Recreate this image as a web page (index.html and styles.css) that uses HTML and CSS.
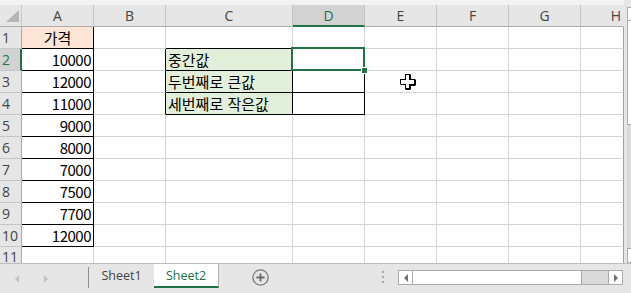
FILE: index.html
```html
<!DOCTYPE html>
<html lang="ko">
<head>
<meta charset="utf-8">
<title>Sheet2</title>
<link rel="stylesheet" href="styles.css">
</head>
<body>
<div class="app">
  <div class="main">
    <div class="sheet">
      <div class="topstrip"></div>

      <div class="hd corner"></div>
      <div class="hd col">A</div>
      <div class="hd col">B</div>
      <div class="hd col">C</div>
      <div class="hd col sel-col">D</div>
      <div class="hd col">E</div>
      <div class="hd col">F</div>
      <div class="hd col">G</div>
      <div class="hd col last">H</div>

      <div class="hd row">1</div>
      <div class="c a-box head-cell">가격</div>
      <div class="c"></div>
      <div class="c bb"></div>
      <div class="c bb"></div>
      <div class="c"></div><div class="c"></div><div class="c"></div><div class="c last"></div>

      <div class="hd row sel-row">2</div>
      <div class="c a-box num">10000</div>
      <div class="c br"></div>
      <div class="c t-box label">중간값</div>
      <div class="c t-box sel-cell"><span class="handle"></span></div>
      <div class="c"></div><div class="c"></div><div class="c"></div><div class="c last"></div>

      <div class="hd row">3</div>
      <div class="c a-box num">12000</div>
      <div class="c br"></div>
      <div class="c t-box label">두번째로 큰값</div>
      <div class="c t-box"></div>
      <div class="c"></div><div class="c"></div><div class="c"></div><div class="c last"></div>

      <div class="hd row">4</div>
      <div class="c a-box num">11000</div>
      <div class="c br"></div>
      <div class="c t-box label">세번째로 작은값</div>
      <div class="c t-box"></div>
      <div class="c"></div><div class="c"></div><div class="c"></div><div class="c last"></div>

      <div class="hd row">5</div>
      <div class="c a-box num">9000</div>
      <div class="c"></div><div class="c"></div><div class="c"></div><div class="c"></div><div class="c"></div><div class="c"></div><div class="c last"></div>

      <div class="hd row">6</div>
      <div class="c a-box num">8000</div>
      <div class="c"></div><div class="c"></div><div class="c"></div><div class="c"></div><div class="c"></div><div class="c"></div><div class="c last"></div>

      <div class="hd row">7</div>
      <div class="c a-box num">7000</div>
      <div class="c"></div><div class="c"></div><div class="c"></div><div class="c"></div><div class="c"></div><div class="c"></div><div class="c last"></div>

      <div class="hd row">8</div>
      <div class="c a-box num">7500</div>
      <div class="c"></div><div class="c"></div><div class="c"></div><div class="c"></div><div class="c"></div><div class="c"></div><div class="c last"></div>

      <div class="hd row">9</div>
      <div class="c a-box num">7700</div>
      <div class="c"></div><div class="c"></div><div class="c"></div><div class="c"></div><div class="c"></div><div class="c"></div><div class="c last"></div>

      <div class="hd row">10</div>
      <div class="c a-box num">12000</div>
      <div class="c"></div><div class="c"></div><div class="c"></div><div class="c"></div><div class="c"></div><div class="c"></div><div class="c last"></div>

      <div class="hd row cut">11</div>
      <div class="c cut"></div><div class="c cut"></div><div class="c cut"></div><div class="c cut"></div><div class="c cut"></div><div class="c cut"></div><div class="c cut"></div><div class="c cut last"></div>

      <svg class="cursor" width="16" height="16" viewBox="0 0 16 16">
        <path d="M5 0 H10 L11 1 V5 H15 L16 6 V11 L15 12 H11 V15 L10 16 H6 L5 15 V11 H1 L0 10 V5 H5 Z" fill="#000"/>
        <path d="M6 1 H9 V6 H14 V10 H9 V14 H6 V10 H1 V6 H6 Z" fill="#fff"/>
      </svg>
    </div>
    <div class="vscroll">
      <div class="vbtn top"></div>
      <div class="vthumb"></div>
      <div class="vtrack"></div>
      <div class="vbtn bottom"></div>
    </div>
  </div>

  <div class="tabbar">
    <div class="nav">
      <span class="tri left"></span>
      <span class="tri right"></span>
    </div>
    <div class="sep"></div>
    <div class="tab">Sheet1</div>
    <div class="tab current">Sheet2</div>
    <div class="add">
      <svg width="17" height="17" viewBox="0 0 17 17">
        <circle cx="8.5" cy="8.5" r="7.6" fill="none" stroke="#7a7a7a" stroke-width="1.3"/>
        <path d="M8.5 4.5 V12.5 M4.5 8.5 H12.5" stroke="#6a6a6a" stroke-width="1.8"/>
      </svg>
    </div>
    <div class="dots"><i></i><i></i><i></i></div>
    <div class="hscroll">
      <div class="hbtn"><span class="htri left"></span></div>
      <div class="hthumb"></div>
      <div class="htrack"></div>
      <div class="hbtn"><span class="htri right"></span></div>
    </div>
  </div>
</div>
</body>
</html>
```

FILE: styles.css
```css
* { box-sizing: border-box; }

html, body {
  margin: 0;
  padding: 0;
}

body {
  width: 631px;
  height: 293px;
  overflow: hidden;
  background: #e6e6e6;
  font-family: "Noto Sans CJK KR", "Noto Sans", sans-serif;
}

.app {
  display: flex;
  flex-direction: column;
  width: 631px;
  height: 293px;
}

.main {
  display: flex;
  height: 263px;
}

.sheet {
  position: relative;
  width: 624px;
  height: 263px;
  display: grid;
  grid-template-columns: 22px 72px 72px 127px 72px 72px 72px 72px 43px;
  grid-template-rows: 5px 22px repeat(10, 22px) 16px;
  background: #ffffff;
}

.topstrip {
  grid-column: 1 / -1;
  background: #f3f3f3;
}

/* headers */
.hd {
  background: #e6e6e6;
  color: #444444;
  font-family: "Open Sans", "Noto Sans", sans-serif;
  font-size: 14px;
  line-height: 21px;
  overflow: hidden;
}

.col {
  text-align: center;
  border-right: 1px solid #c6c6c6;
  border-bottom: 1px solid #ababab;
}

.col.last {
  border-right: 1px solid #e6e6e6;
  text-align: right;
  padding-right: 2px;
}

.corner {
  position: relative;
  border-right: 1px solid #c6c6c6;
  border-bottom: 1px solid #ababab;
}

.corner::before {
  content: "";
  position: absolute;
  left: 6px;
  top: 5px;
  width: 13px;
  height: 12px;
  background: #b5b5b5;
  clip-path: polygon(100% 0, 100% 100%, 0 100%);
}

.sel-col {
  background: #d2d2d2;
  color: #217346;
  border-bottom: 2px solid #217346;
}

.row {
  padding-left: 2px;
  border-right: 1px solid #ababab;
  border-bottom: 1px solid #c6c6c6;
}

.row.cut {
  border-bottom: none;
  line-height: 20px;
}

.sel-row {
  background: #d2d2d2;
  color: #217346;
  border-right: 2px solid #217346;
}

/* cells */
.c {
  border-right: 1px solid #d4d4d4;
  border-bottom: 1px solid #d4d4d4;
  font-size: 15px;
  line-height: 21px;
  color: #000;
  white-space: nowrap;
  overflow: visible;
}

.c.last {
  border-right: 1px solid #a0a0a0;
}

.c.cut {
  border-bottom: none;
}

.a-box {
  border-right-color: #000;
  border-bottom-color: #000;
}

.head-cell {
  background: #fce4d6;
  text-align: center;
}

.num {
  text-align: right;
  padding-right: 2px;
  letter-spacing: -0.5px;
}

.bb { border-bottom-color: #000; }
.br { border-right-color: #000; }

.t-box {
  border-right-color: #000;
  border-bottom-color: #000;
}

.label {
  background: #e2efda;
  padding-left: 2px;
}

.sel-cell {
  position: relative;
}

.sel-cell::after {
  content: "";
  position: absolute;
  left: -2px;
  top: -2px;
  right: -1px;
  bottom: -1px;
  border: 2px solid #217346;
}

.handle {
  position: absolute;
  right: -4px;
  bottom: -4px;
  width: 7px;
  height: 7px;
  background: #217346;
  border: 1px solid #ffffff;
  z-index: 2;
}

.cursor {
  position: absolute;
  left: 400px;
  top: 74px;
}

/* vertical scrollbar */
.vscroll {
  width: 7px;
  padding-top: 7px;
  padding-left: 3px;
  display: flex;
  flex-direction: column;
}

.vbtn, .vthumb {
  background: #ffffff;
  border: 1px solid #ababab;
  border-right: none;
}

.vbtn.top { height: 14px; }
.vthumb { height: 104px; border-top: none; }
.vtrack { height: 123px; background: #dadada; }
.vbtn.bottom { height: 15px; }

/* tab bar */
.tabbar {
  height: 30px;
  border-top: 1px solid #bdbdbd;
  display: flex;
  align-items: flex-start;
  background: #e6e6e6;
  font-family: "Open Sans", "Noto Sans", sans-serif;
}

.nav {
  width: 88px;
  height: 29px;
  display: flex;
  align-items: center;
  padding-left: 15px;
  gap: 25px;
}

.tri {
  width: 0;
  height: 0;
  border-top: 4px solid transparent;
  border-bottom: 4px solid transparent;
}

.tri.left { border-right: 4px solid #c2c2c2; }
.tri.right { border-left: 4px solid #c2c2c2; }

.sep {
  width: 1px;
  height: 21px;
  margin-top: 3px;
  background: #8f8f8f;
}

.tab {
  width: 65px;
  height: 24px;
  font-size: 12.5px;
  line-height: 23px;
  color: #444444;
  text-align: center;
}

.tab.current {
  background: #ffffff;
  color: #217346;
  border-bottom: 2px solid #217346;
  border-right: 1px solid #b0b0b0;
}

.add {
  margin-left: 33px;
  margin-top: 5px;
  width: 17px;
  height: 17px;
}

.add svg { display: block; }

.dots {
  margin-left: 113px;
  margin-top: 7px;
  display: flex;
  flex-direction: column;
  gap: 3px;
}

.dots i {
  display: block;
  width: 2px;
  height: 2px;
  background: #a8a8a8;
}

.hscroll {
  margin-left: 14px;
  margin-top: 6px;
  width: 225px;
  height: 15px;
  display: flex;
  border: 1px solid #ababab;
  background: #ffffff;
}

.hbtn {
  width: 14px;
  height: 13px;
  display: flex;
  align-items: center;
  justify-content: center;
  background: #ffffff;
}

.hbtn:first-child { border-right: 1px solid #ababab; }
.hbtn:last-child { border-left: 1px solid #ababab; }

.hthumb {
  width: 169px;
  border-right: 1px solid #ababab;
}

.htrack {
  flex: 1;
  background: #dadada;
}

.htri {
  width: 0;
  height: 0;
  border-top: 4px solid transparent;
  border-bottom: 4px solid transparent;
}

.htri.left { border-right: 4px solid #6f6f6f; }
.htri.right { border-left: 4px solid #6f6f6f; }
```
